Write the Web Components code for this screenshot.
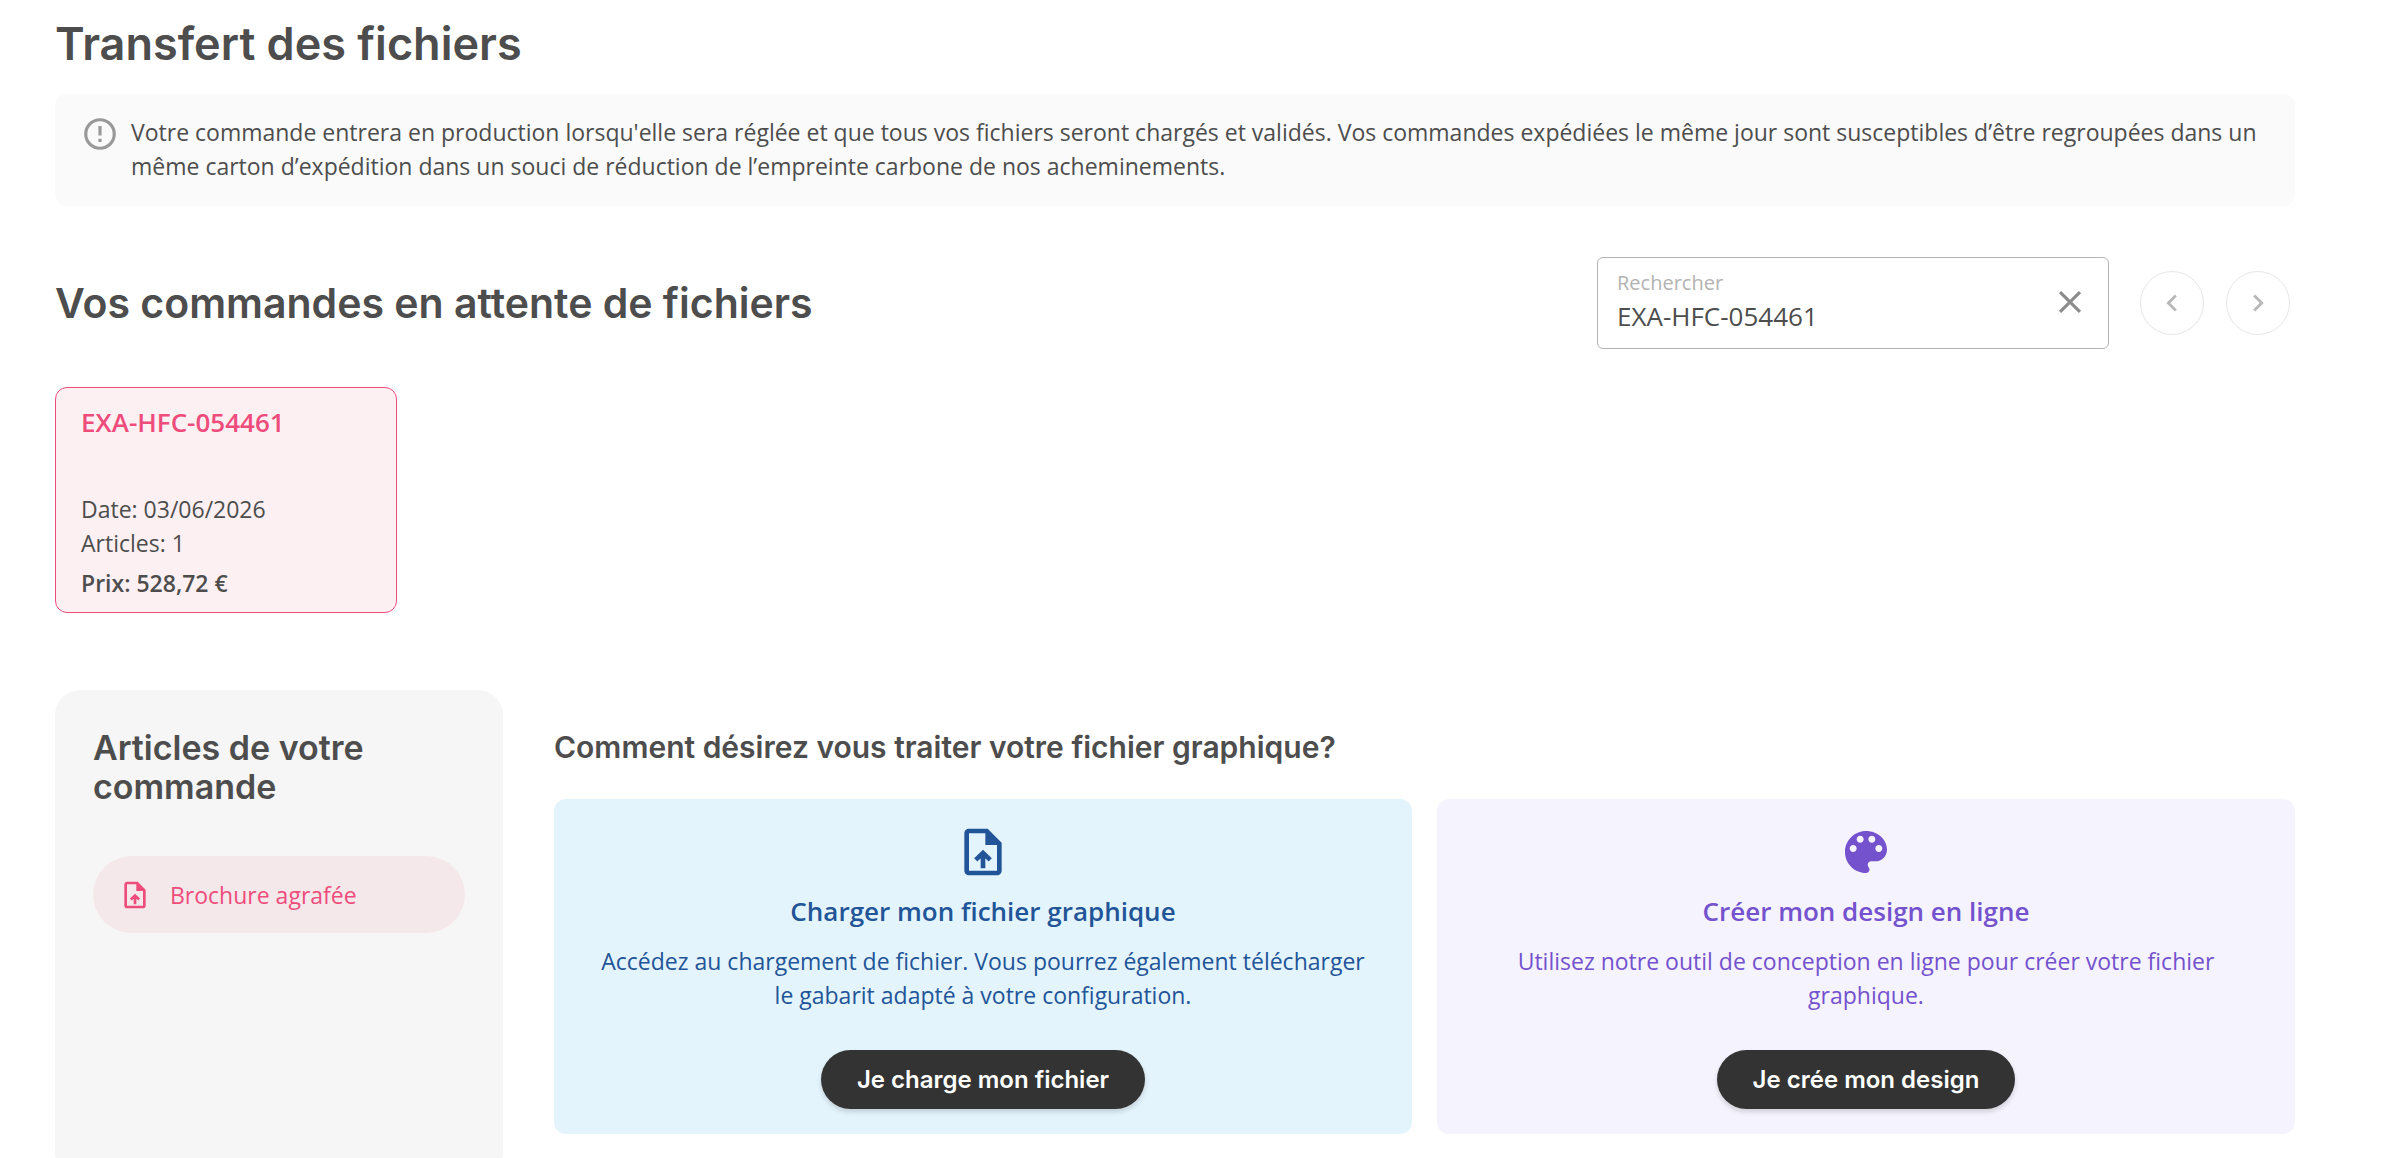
<!DOCTYPE html>
<html lang="fr">
<head>
<meta charset="utf-8">
<meta name="viewport" content="width=device-width, initial-scale=1">
<title>Transfert des fichiers</title>
<style>
  body {
    margin: 0;
    background: #fff;
    color: #4d4d4d;
    font-family: "Open Sans", "Noto Sans", sans-serif;
    font-size: 23px;
    line-height: 34px;
    --font-title: Inter, "Open Sans", sans-serif;
    --pink: #ee4c7b;
  }
</style>
</head>
<body>
<transfer-page></transfer-page>

<script>
const icons = {
  alert: '<path d="M12 2a10 10 0 1 0 0 20 10 10 0 0 0 0-20zm0 18a8 8 0 1 1 0-16 8 8 0 0 1 0 16zM11 7h2v6h-2zm0 8h2v2h-2z"/>',
  close: '<path d="M19 6.41L17.59 5 12 10.59 6.41 5 5 6.41 10.59 12 5 17.59 6.41 19 12 13.41 17.59 19 19 17.59 13.41 12z"/>',
  left: '<path d="M15.41 7.41L14 6l-6 6 6 6 1.41-1.41L10.83 12z"/>',
  right: '<path d="M10 6L8.59 7.41 13.17 12l-4.58 4.59L10 18l6-6z"/>',
  file: '<path d="M14 2H6c-1.1 0-2 .9-2 2v16c0 1.1.9 2 2 2h12c1.1 0 2-.9 2-2V8l-6-6zm4 18H6V4h7v5h5v11z"/><path d="M12 19v-5.8M8.9 15.4L12 12.4l3.1 3" fill="none" stroke="currentColor" stroke-width="2"/>',
  palette: '<path d="M12 3c-4.97 0-9 4.03-9 9s4.03 9 9 9c.83 0 1.5-.67 1.5-1.5 0-.39-.15-.74-.39-1.01-.23-.26-.38-.61-.38-.99 0-.83.67-1.5 1.5-1.5H16c2.76 0 5-2.24 5-5 0-4.42-4.03-8-9-8zm-5.5 9c-.83 0-1.5-.67-1.5-1.5S5.67 9 6.5 9 8 9.67 8 10.5 7.33 12 6.5 12zm3-4C8.67 8 8 7.33 8 6.5S8.67 5 9.5 5s1.5.67 1.5 1.5S10.33 8 9.5 8zm5 0c-.83 0-1.5-.67-1.5-1.5S13.67 5 14.5 5s1.5.67 1.5 1.5S15.33 8 14.5 8zm3 4c-.83 0-1.5-.67-1.5-1.5S16.67 9 17.5 9s1.5.67 1.5 1.5-.67 1.5-1.5 1.5z"/>',
};

class AppIcon extends HTMLElement {
  connectedCallback() {
    this.attachShadow({ mode: 'open' }).innerHTML = `
      <style>
        :host { display: block; flex: none; width: 38px; height: 38px; }
        svg { display: block; width: 100%; height: 100%; fill: currentColor; }
      </style>
      <svg viewBox="0 0 24 24" aria-hidden="true">${icons[this.getAttribute('name')]}</svg>
    `;
  }
}

class InfoNotice extends HTMLElement {
  connectedCallback() {
    this.attachShadow({ mode: 'open' }).innerHTML = `
      <style>
        :host {
          display: flex;
          gap: 12px;
          padding: 21px 26px 23px;
          background: #fafafa;
          border-radius: 12px;
        }
        app-icon { color: #999; }
        p { margin: 0; }
      </style>
      <app-icon name="alert"></app-icon>
      <p><slot></slot></p>
    `;
  }
}

class SearchField extends HTMLElement {
  connectedCallback() {
    this.attachShadow({ mode: 'open' }).innerHTML = `
      <style>
        :host {
          display: flex;
          align-items: center;
          box-sizing: border-box;
          width: 512px;
          height: 92px;
          padding: 0 19px 2px;
          border: 1px solid #b3b3b3;
          border-radius: 6px;
        }
        .field { flex: 1; display: flex; flex-direction: column; min-width: 0; }
        label { font-size: 20px; line-height: 28px; color: #b3b3b3; }
        input {
          font: inherit;
          font-size: 26px;
          line-height: 38px;
          height: 38px;
          color: inherit;
          border: 0;
          padding: 0;
          background: none;
          outline: none;
        }
        button { border: 0; padding: 0; background: none; color: #8c8c8c; cursor: pointer; }
      </style>
      <div class="field">
        <label for="search">${this.getAttribute('label')}</label>
        <input id="search" type="text" value="${this.getAttribute('value')}">
      </div>
      <button type="button" aria-label="Effacer"><app-icon name="close"></app-icon></button>
    `;
    this.input = this.shadowRoot.querySelector('input');
    this.shadowRoot.querySelector('button').addEventListener('click', () => {
      this.input.value = '';
      this.input.focus();
    });
  }
}

class PagerButton extends HTMLElement {
  connectedCallback() {
    this.attachShadow({ mode: 'open' }).innerHTML = `
      <style>
        :host { display: block; }
        button {
          display: grid;
          place-items: center;
          width: 64px;
          height: 64px;
          padding: 0;
          border: 1px solid #e6e6e6;
          border-radius: 50%;
          background: none;
          color: #b8b8b8;
        }
        app-icon { width: 34px; height: 34px; }
      </style>
      <button type="button" disabled aria-label="${this.getAttribute('label')}">
        <app-icon name="${this.getAttribute('icon')}"></app-icon>
      </button>
    `;
  }
}

class OrderCard extends HTMLElement {
  connectedCallback() {
    this.attachShadow({ mode: 'open' }).innerHTML = `
      <style>
        :host { display: block; width: 342px; }
        button {
          display: flex;
          flex-direction: column;
          box-sizing: border-box;
          width: 100%;
          padding: 15px 25px 12px;
          border: 1px solid var(--pink);
          border-radius: 12px;
          background: #fdf0f3;
          color: inherit;
          font: inherit;
          text-align: left;
          cursor: pointer;
        }
        .ref { margin-bottom: 51px; font-size: 26px; line-height: 38px; font-weight: 600; color: var(--pink); }
        .price { margin-top: 6px; font-weight: 600; }
      </style>
      <button type="button" aria-pressed="true">
        <span class="ref">${this.getAttribute('ref')}</span>
        <span>Date: ${this.getAttribute('date')}</span>
        <span>Articles: ${this.getAttribute('items')}</span>
        <span class="price">Prix: ${this.getAttribute('price')}</span>
      </button>
    `;
  }
}

class ArticlePanel extends HTMLElement {
  connectedCallback() {
    this.attachShadow({ mode: 'open' }).innerHTML = `
      <style>
        :host {
          display: block;
          box-sizing: border-box;
          min-height: 488px;
          padding: 38px;
          border-radius: 25px;
          background: #f6f6f6;
        }
        h3 { margin: 0 0 50px; font: 600 34px/39px var(--font-title); }
        nav { display: flex; flex-direction: column; gap: 12px; }
      </style>
      <h3>${this.getAttribute('heading')}</h3>
      <nav><slot></slot></nav>
    `;
  }
}

class ArticleLink extends HTMLElement {
  connectedCallback() {
    this.attachShadow({ mode: 'open' }).innerHTML = `
      <style>
        :host { display: block; }
        a {
          display: flex;
          align-items: center;
          gap: 19px;
          height: 77px;
          padding: 0 26px;
          border-radius: 39px;
          background: #f5e8eb;
          color: var(--pink);
          text-decoration: none;
        }
        app-icon { width: 32px; height: 32px; }
      </style>
      <a href="#" aria-current="true"><app-icon name="file"></app-icon><span><slot></slot></span></a>
    `;
  }
}

class ChoiceCard extends HTMLElement {
  connectedCallback() {
    this.attachShadow({ mode: 'open' }).innerHTML = `
      <style>
        :host {
          display: flex;
          flex-direction: column;
          align-items: center;
          padding: 25px 38px;
          border-radius: 12px;
          text-align: center;
          background: #e4f4fd;
          color: #225597;
        }
        :host([theme="violet"]) { background: #f5f3fd; color: #7452ce; }
        app-icon { width: 56px; height: 56px; }
        h4 { margin: 12px 0 14px; font-size: 26px; line-height: 38px; font-weight: 600; }
        p { margin: 0 0 38px; }
        button {
          height: 59px;
          padding: 0 36px;
          border: 0;
          border-radius: 30px;
          background: #333;
          color: #fff;
          font: 600 24px/30px var(--font-title);
          box-shadow: 0 3px 5px rgba(0, 0, 0, .15);
          cursor: pointer;
        }
      </style>
      <app-icon name="${this.getAttribute('icon')}"></app-icon>
      <h4>${this.getAttribute('heading')}</h4>
      <p><slot></slot></p>
      <button type="button">${this.getAttribute('action')}</button>
    `;
  }
}

class TransferPage extends HTMLElement {
  connectedCallback() {
    this.attachShadow({ mode: 'open' }).innerHTML = `
      <style>
        :host {
          display: block;
          box-sizing: border-box;
          height: 100vh;
          overflow: hidden;
          padding: 19px 95px 0 55px;
        }
        h1, h2, h3 { margin: 0; font-family: var(--font-title); font-weight: 600; }
        h1 { margin-bottom: 25px; font-size: 45px; line-height: 50px; }
        h2 { flex: 1; font-size: 41px; line-height: 48px; }
        h3 { margin: 38px 0 33px; font-size: 30px; line-height: 38px; }
        .orders-head { display: flex; align-items: center; gap: 22px; margin: 51px 0 38px; padding-right: 5px; }
        .pager { display: flex; gap: 22px; padding-left: 9px; }
        .orders { display: flex; gap: 25px; margin-bottom: 77px; }
        .work { display: grid; grid-template-columns: 20% 1fr; gap: 51px; }
        .choices { display: grid; grid-template-columns: 1fr 1fr; gap: 25px; }
      </style>
      <main>
        <h1>Transfert des fichiers</h1>
        <info-notice>Votre commande entrera en production lorsqu'elle sera réglée et que tous vos fichiers seront chargés et validés. Vos commandes expédiées le même jour sont susceptibles d’être regroupées dans un même carton d’expédition dans un souci de réduction de l’empreinte carbone de nos acheminements.</info-notice>
        <div class="orders-head">
          <h2>Vos commandes en attente de fichiers</h2>
          <search-field label="Rechercher" value="EXA-HFC-054461"></search-field>
          <div class="pager">
            <pager-button icon="left" label="Précédent"></pager-button>
            <pager-button icon="right" label="Suivant"></pager-button>
          </div>
        </div>
        <div class="orders">
          <order-card ref="EXA-HFC-054461" date="03/06/2026" items="1" price="528,72 €"></order-card>
        </div>
        <div class="work">
          <article-panel heading="Articles de votre commande">
            <article-link>Brochure agrafée</article-link>
          </article-panel>
          <section>
            <h3>Comment désirez vous traiter votre fichier graphique?</h3>
            <div class="choices">
              <choice-card icon="file" heading="Charger mon fichier graphique" action="Je charge mon fichier">Accédez au chargement de fichier. Vous pourrez également télécharger le gabarit adapté à votre configuration.</choice-card>
              <choice-card theme="violet" icon="palette" heading="Créer mon design en ligne" action="Je crée mon design">Utilisez notre outil de conception en ligne pour créer votre fichier graphique.</choice-card>
            </div>
          </section>
        </div>
      </main>
    `;
  }
}

customElements.define('app-icon', AppIcon);
customElements.define('info-notice', InfoNotice);
customElements.define('search-field', SearchField);
customElements.define('pager-button', PagerButton);
customElements.define('order-card', OrderCard);
customElements.define('article-panel', ArticlePanel);
customElements.define('article-link', ArticleLink);
customElements.define('choice-card', ChoiceCard);
customElements.define('transfer-page', TransferPage);
</script>
</body>
</html>
